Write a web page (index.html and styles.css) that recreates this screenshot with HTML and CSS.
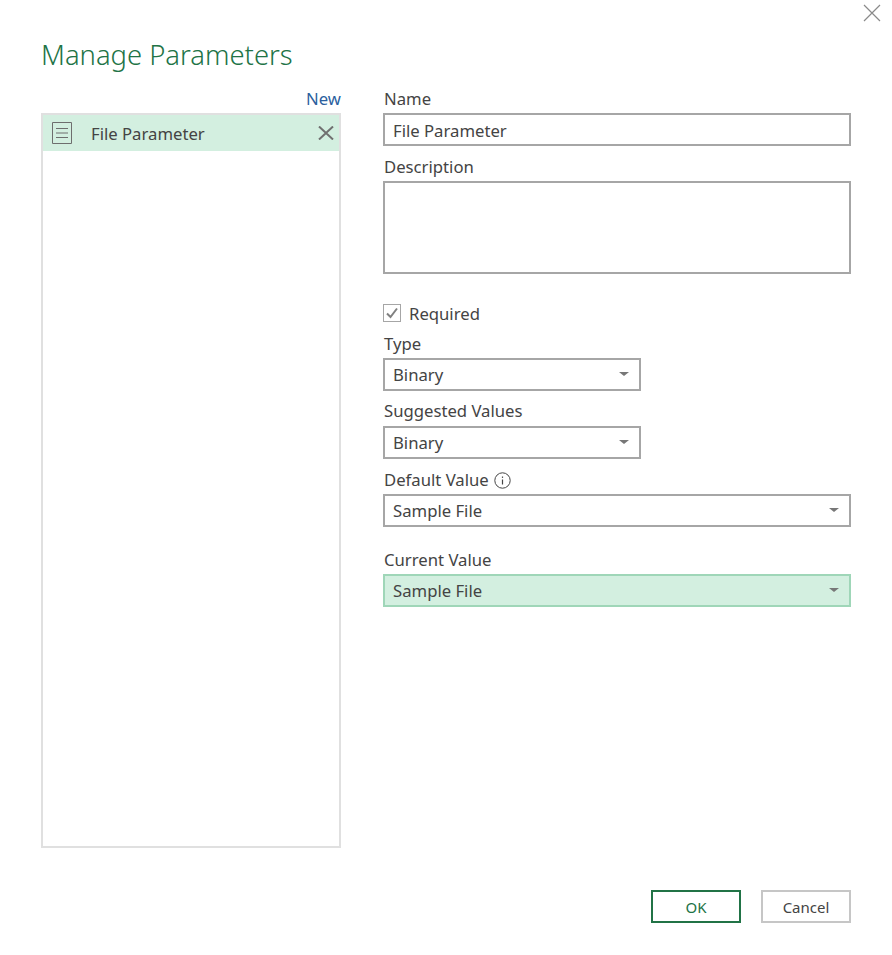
FILE: index.html
```html
<!DOCTYPE html>
<html lang="en">
<head>
  <meta charset="UTF-8" />
  <title>Manage Parameters</title>
  <link rel="stylesheet" href="styles.css">
</head>
<body>
  <div class="dialog">
    <div class="topbar">
      <svg class="close" width="18" height="18" viewBox="0 0 18 18"><path d="M1 1l16 16M17 1L1 17" stroke="#8a8a8a" stroke-width="1.2" fill="none"/></svg>
    </div>

    <h1>Manage Parameters</h1>

    <div class="columns">
      <div class="left">
        <div class="new-row"><a class="new">New</a></div>
        <div class="list">
          <div class="list-item">
            <svg class="doc" width="20" height="22" viewBox="0 0 20 22"><path d="M.5.5h19v21H.5z" fill="none" stroke="#6e6e6e"/><path d="M4 6.500h12M4 11h12M4 15.500h12" stroke="#6e6e6e"/></svg>
            <span class="item-name">File Parameter</span>
            <svg class="remove" width="16" height="14" viewBox="0 0 16 14"><path d="M1 .5l14 13M15 .5L1 13.500" stroke="#707070" stroke-width="2" fill="none"/></svg>
          </div>
        </div>
      </div>

      <div class="right">
        <label class="lbl lbl-first">Name</label>
        <div class="box">File Parameter</div>

        <label class="lbl lbl-desc">Description</label>
        <div class="box area"></div>

        <div class="check-row">
          <span class="check">
            <svg width="14" height="14" viewBox="0 0 14 14"><path d="M2 7.500l3.500 3.500L12 2.500" stroke="#808080" stroke-width="2" fill="none"/></svg>
          </span>
          Required
        </div>

        <label class="lbl lbl-type">Type</label>
        <div class="box select short">Binary<span class="arrow"></span></div>

        <label class="lbl lbl-sugg">Suggested Values</label>
        <div class="box select short">Binary<span class="arrow"></span></div>

        <label class="lbl lbl-def">Default Value
          <svg class="info" width="17" height="17" viewBox="0 0 17 17"><circle cx="8.500" cy="8.500" r="7.700" fill="none" stroke="#444"/><path d="M8.500 7.500v5" stroke="#444" stroke-width="1.200"/><path d="M8.500 4.500v1.400" stroke="#444" stroke-width="1.200"/></svg>
        </label>
        <div class="box select">Sample File<span class="arrow"></span></div>

        <label class="lbl lbl-cur">Current Value</label>
        <div class="box select current">Sample File<span class="arrow"></span></div>
      </div>
    </div>

    <div class="buttons">
      <button class="btn ok">OK</button>
      <button class="btn">Cancel</button>
    </div>
  </div>
</body>
</html>
```

FILE: styles.css
```css
* {
  box-sizing: border-box;
}

html, body {
  margin: 0;
  padding: 0;
  background: #fff;
  color: #444;
  font-family: "Noto Sans", "Open Sans", sans-serif;
  font-size: 16.7px;
}

.dialog {
  width: 892px;
  height: 955px;
  padding: 0 41px;
}

.topbar {
  display: flex;
  justify-content: flex-end;
  height: 37px;
  padding-top: 4px;
  margin-right: -30px;
}

h1 {
  margin: 0;
  height: 50px;
  font-size: 27.4px;
  line-height: 36px;
  font-weight: 300;
  color: #217346;
}

.columns {
  display: flex;
  height: 761px;
}

.left {
  width: 300px;
  margin-right: 42px;
  display: flex;
  flex-direction: column;
}

.new-row {
  height: 26px;
  text-align: right;
  line-height: 24px;
}

.new {
  color: #2b5f9e;
}

.list {
  height: 735px;
  border: 2px solid #e0e0e0;
}

.list-item {
  display: flex;
  align-items: center;
  height: 36px;
  padding: 0 5px 0 9px;
  background: #d3efe0;
}

.item-name {
  flex: 1;
  margin-left: 19px;
}

.right {
  width: 468px;
}

.lbl {
  display: block;
  height: 22px;
  line-height: 22px;
  padding-left: 1px;
}

.lbl-first { margin-top: 1px; height: 25px; }
.lbl-desc { margin-top: 10px; height: 25px; }
.lbl-type { margin-top: 11px; height: 25px; }
.lbl-sugg { margin-top: 9px; height: 26px; }
.lbl-def { margin-top: 7px; height: 28px; display: flex; align-items: center; gap: 5px; }
.lbl-cur { margin-top: 22px; height: 25px; }

.box {
  height: 33px;
  border: 2px solid #a6a6a6;
  padding: 2px 8px 0;
  line-height: 27px;
  background: #fff;
}

.area {
  height: 93px;
}

.check-row {
  display: flex;
  align-items: center;
  gap: 8px;
  margin-top: 30px;
  height: 18px;
}

.check {
  display: flex;
  align-items: center;
  justify-content: center;
  width: 18px;
  height: 18px;
  border: 1px solid #a6a6a6;
}

.select {
  display: flex;
  align-items: center;
  justify-content: space-between;
  padding: 0 10px 0 8px;
}

.short {
  width: 258px;
}

.current {
  background: #d3efe0;
  border-color: #9fd6b8;
}

.arrow {
  width: 0;
  height: 0;
  margin-top: -2px;
  border-left: 5px solid transparent;
  border-right: 5px solid transparent;
  border-top: 4px solid #777;
}

.buttons {
  display: flex;
  justify-content: flex-end;
  gap: 20px;
  margin-top: 42px;
}

.btn {
  width: 90px;
  height: 33px;
  border: 2px solid #c6c6c6;
  background: #fff;
  color: #444;
  font-family: inherit;
  font-size: 15px;
  padding: 0;
}

.ok {
  border-color: #217346;
  color: #217346;
}
```
